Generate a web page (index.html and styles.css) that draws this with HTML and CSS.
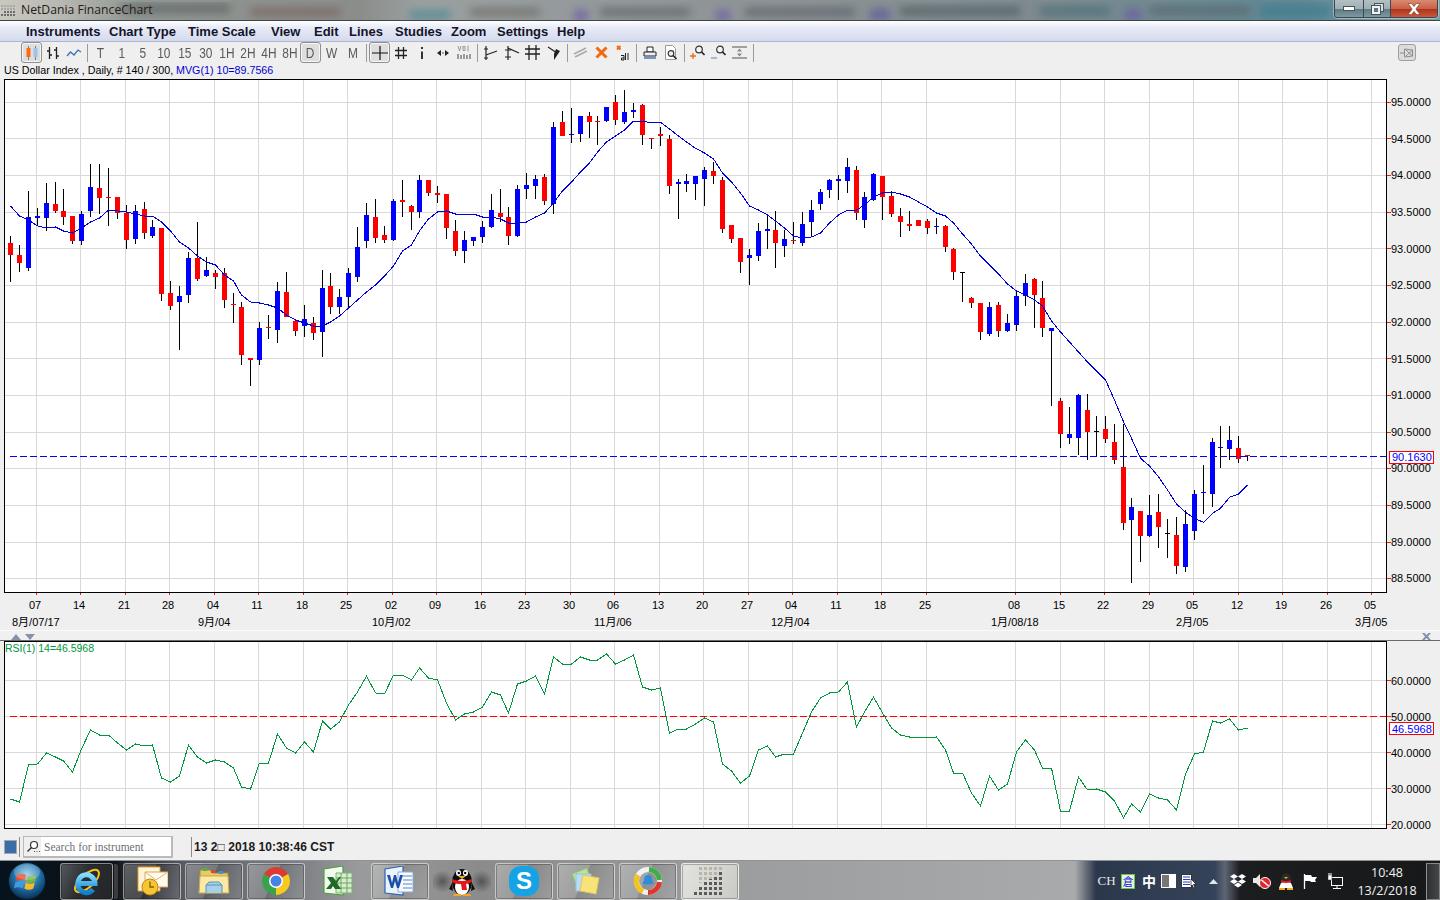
FILE: index.html
```html
<!DOCTYPE html>
<html lang="en">
<head>
<meta charset="utf-8">
<title>NetDania FinanceChart</title>
<link rel="stylesheet" href="styles.css">
</head>
<body>
<div class="window">
  <header class="titlebar">
    <svg class="aero" width="1440" height="21" viewBox="0 0 1440 21">
      <defs><filter id="soft"><feGaussianBlur stdDeviation="4"/></filter></defs>
      <g filter="url(#soft)" opacity="0.750">
        <rect x="120" y="4" width="110" height="9" fill="#5d6462"/>
        <rect x="250" y="8" width="90" height="8" fill="#77605c"/>
        <rect x="410" y="10" width="40" height="10" fill="#4f8a96"/>
        <rect x="470" y="8" width="70" height="8" fill="#6d6a66"/>
        <rect x="574" y="10" width="14" height="11" fill="#6a5aa6"/>
        <rect x="600" y="8" width="90" height="8" fill="#5a6266"/>
        <rect x="716" y="10" width="14" height="11" fill="#6a5aa6"/>
        <rect x="745" y="8" width="110" height="8" fill="#586068"/>
        <rect x="870" y="9" width="20" height="11" fill="#5a5a9a"/>
        <rect x="900" y="7" width="120" height="8" fill="#4c5a60"/>
        <rect x="1040" y="6" width="70" height="10" fill="#4d6f7a"/>
        <rect x="1125" y="9" width="16" height="11" fill="#6a5aa6"/>
        <rect x="1150" y="6" width="100" height="9" fill="#57686e"/>
        <rect x="1260" y="5" width="70" height="12" fill="#3d7d90"/>
      </g>
    </svg>
    <svg class="app-icon" width="16" height="16" viewBox="0 0 16 16">
      <g fill="#6d6d6d"><rect x="1" y="12" width="2" height="2"/><rect x="4" y="12" width="2" height="2"/><rect x="7" y="12" width="2" height="2"/><rect x="10" y="12" width="2" height="2"/><rect x="13" y="12" width="2" height="2"/><rect x="4" y="9" width="2" height="2"/><rect x="7" y="9" width="2" height="2"/><rect x="10" y="9" width="2" height="2"/><rect x="13" y="9" width="2" height="2"/></g>
      <g fill="#a9a9a0"><rect x="1" y="3" width="2" height="2"/><rect x="4" y="3" width="2" height="2"/><rect x="7" y="3" width="2" height="2"/><rect x="10" y="3" width="2" height="2"/><rect x="13" y="3" width="2" height="2"/><rect x="1" y="6" width="2" height="2"/><rect x="4" y="6" width="2" height="2"/><rect x="7" y="6" width="2" height="2"/><rect x="10" y="6" width="2" height="2"/><rect x="13" y="6" width="2" height="2"/></g>
    </svg>
    <span class="title-text">NetDania FinanceChart</span>
    <div class="win-controls">
      <div class="win-btn min"><svg width="12" height="6" viewBox="0 0 12 6"><rect x="0.5" y="0.5" width="11" height="4" fill="#fff" stroke="#44555c"/></svg></div>
      <div class="win-btn max"><svg width="13" height="12" viewBox="0 0 13 12"><rect x="3.5" y="0.5" width="9" height="8" fill="#d8dfe2" stroke="#44555c"/><rect x="0.5" y="2.5" width="9" height="9" fill="#eef2f3" stroke="#44555c"/><rect x="3" y="5" width="4" height="4" fill="#61747c"/></svg></div>
      <div class="win-btn close"><svg width="14" height="12" viewBox="0 0 14 12"><path d="M1 0.5h3.5L7 3.6 9.5 0.5H13L8.8 6 13 11.5H9.500L7 8.400 4.500 11.500H1L5.200 6Z" fill="#fff" stroke="#7c3225" stroke-width="0.600"/></svg></div>
    </div>
  </header>

  <nav class="menubar">
    <span>Instruments</span><span>Chart Type</span><span>Time Scale</span><span>View</span><span>Edit</span><span>Lines</span><span>Studies</span><span>Zoom</span><span>Settings</span><span>Help</span>
  </nav>

  <div class="toolbar">
    <div class="tool on"><svg width="16" height="16" viewBox="0 0 16 16"><path d="M4.500 1v14M11.500 1v14" stroke="#7a7a7a"/><rect x="2.500" y="3" width="4" height="9" fill="#ff6a10"/><rect x="9.500" y="3" width="4" height="9" fill="#9cc4ee"/></svg></div>
    <div class="tool"><svg width="14" height="16" viewBox="0 0 14 16"><path d="M3.500 2v12M1 6h2.500M3.500 10H6M10.500 2v12M8 5h2.500M10.500 11H13" stroke="#222" stroke-width="1.300" fill="none"/></svg></div>
    <div class="tool"><svg width="16" height="10" viewBox="0 0 16 10"><path d="M1 8l3.500-4L8 7l4-5 3 2" stroke="#3f6fb5" stroke-width="1.300" fill="none"/></svg></div>
    <div class="tool-sep"></div>
    <div class="tool"><span class="tool-label">T</span></div><div class="tool"><span class="tool-label">1</span></div><div class="tool"><span class="tool-label">5</span></div><div class="tool"><span class="tool-label">10</span></div><div class="tool"><span class="tool-label">15</span></div><div class="tool"><span class="tool-label">30</span></div><div class="tool"><span class="tool-label">1H</span></div><div class="tool"><span class="tool-label">2H</span></div><div class="tool"><span class="tool-label">4H</span></div><div class="tool"><span class="tool-label">8H</span></div><div class="tool on"><span class="tool-label">D</span></div><div class="tool"><span class="tool-label">W</span></div><div class="tool"><span class="tool-label">M</span></div>
    <div class="tool-sep"></div>
    <div class="tool on"><svg width="16" height="16" viewBox="0 0 16 16"><path d="M8 1v14M0 8h16" stroke="#111" stroke-width="1.200"/></svg></div>
    <div class="tool"><svg width="14" height="14" viewBox="0 0 14 14"><path d="M4.500 1v12M9.500 1v12M1 4.500h12M1 9.500h12" stroke="#222" stroke-width="1.300"/></svg></div>
    <div class="tool"><svg width="8" height="14" viewBox="0 0 8 14"><path d="M4 1v2M4 5.500v7.500" stroke="#333" stroke-width="2"/></svg></div>
    <div class="tool"><svg width="14" height="8" viewBox="0 0 14 8"><path d="M1 4l4-3v6zM13 4L9 1v6z" fill="#222"/><circle cx="7" cy="4" r="0.700" fill="#222"/></svg></div>
    <div class="tool"><svg width="14" height="15" viewBox="0 0 14 15"><g fill="#999"><rect x="0" y="9" width="2" height="5"/><rect x="3" y="10" width="2" height="4"/><rect x="6" y="9" width="2" height="5"/><rect x="9" y="10" width="2" height="4"/><rect x="12" y="9" width="2" height="5"/></g><path d="M1 1l1.500 5L4 1M6 1.500h2v4H6zM11 0.500v6" stroke="#999" fill="none"/></svg></div>
    <div class="tool-sep"></div>
    <div class="tool"><svg width="16" height="16" viewBox="0 0 16 16"><path d="M3 1v14M3 10l11-4" stroke="#222" stroke-width="1.200" fill="none"/><path d="M1 4h4M1 13h4" stroke="#222"/></svg></div>
    <div class="tool"><svg width="16" height="16" viewBox="0 0 16 16"><path d="M4 1v14M4 3l11 5" stroke="#222" stroke-width="1.200" fill="none"/><path d="M1 5h6M1 12h6" stroke="#222"/></svg></div>
    <div class="tool"><svg width="15" height="15" viewBox="0 0 15 15"><path d="M4 0v15M11 0v15M0 4h15M0 9h15" stroke="#222" stroke-width="1.300"/></svg></div>
    <div class="tool"><svg width="14" height="14" viewBox="0 0 14 14"><path d="M1 1l9 6" stroke="#222" stroke-width="1.200"/><path d="M9 3l4 2-6 9v-6z" fill="#222"/></svg></div>
    <div class="tool-sep"></div>
    <div class="tool"><svg width="15" height="11" viewBox="0 0 15 11"><path d="M1 7l12-6M2 10l12-6" stroke="#aaa" stroke-width="1.600"/></svg></div>
    <div class="tool"><svg width="13" height="13" viewBox="0 0 13 13"><path d="M1.500 1.500l10 10M11.500 1.500l-10 10" stroke="#f3690f" stroke-width="3"/></svg></div>
    <div class="tool"><svg width="14" height="16" viewBox="0 0 14 16"><path d="M1 1l3.500 3.500M4.500 1L1 4.500" stroke="#f3690f" stroke-width="1.800"/><path d="M5 10.500h3v4.500H5.500v-2H8M9.500 8v7M12 8v7" stroke="#222" fill="none"/></svg></div>
    <div class="tool-sep"></div>
    <div class="tool"><svg width="14" height="13" viewBox="0 0 14 13"><path d="M4 1h6v5H4z" fill="#fff" stroke="#222"/><path d="M1 6h12v4H1z" fill="#eee" stroke="#222"/><path d="M1 12h12" stroke="#4a78b8" stroke-width="1.500"/></svg></div>
    <div class="tool"><svg width="14" height="15" viewBox="0 0 14 15"><path d="M1.500 0.500h7l3 3v11h-10z" fill="#fff" stroke="#999"/><circle cx="7" cy="8.500" r="2.800" fill="#eef" stroke="#333" stroke-width="1.200"/><path d="M9 10.500l3.500 3.500" stroke="#222" stroke-width="1.600"/></svg></div>
    <div class="tool-sep"></div>
    <div class="tool"><svg width="15" height="15" viewBox="0 0 15 15"><circle cx="9" cy="4.500" r="3.300" fill="#f4f4f4" stroke="#333" stroke-width="1.200"/><path d="M11.500 7l3 3" stroke="#222" stroke-width="1.600"/><path d="M3 8v6M0 11h6" stroke="#f3690f" stroke-width="1.300"/></svg></div>
    <div class="tool"><svg width="15" height="15" viewBox="0 0 15 15"><circle cx="9" cy="4.500" r="3.300" fill="#f4f4f4" stroke="#333" stroke-width="1.200"/><path d="M11.500 7l3 3" stroke="#222" stroke-width="1.600"/><path d="M0 13h6" stroke="#7c9cc8" stroke-width="1.300"/></svg></div>
    <div class="tool"><svg width="15" height="13" viewBox="0 0 15 13"><path d="M0 1h15M0 12h15" stroke="#888" stroke-width="1.300"/><path d="M7.500 2.500l-2.500 3h5zM7.500 10.500l-2.500-3h5z" fill="#888"/></svg></div>
    <div class="tool-sep"></div>
    <div class="pin"><svg width="14" height="12" viewBox="0 0 14 12"><path d="M0 6h4M4.500 2v8M4.500 2l8 1v6l-8 1M12.500 3L6 9M6 3l6.500 6" stroke="#8c8c8c" fill="none"/></svg></div>
  </div>

  <div class="infoline">US Dollar Index , Daily, # 140 / 300, <span class="info-blue">MVG(1) 10=89.7566</span></div>

  <svg class="pane main-pane" width="1440" height="551" viewBox="0 79 1440 551">
    <rect class="frame" x="4.500" y="79.500" width="1382" height="513"/>
    <g id="main-grid"></g>
    <g id="candles"></g>
    <polyline id="ma" class="ma-line" points=""/>
    <line class="dash-blue" x1="10" y1="456.500" x2="1387" y2="456.500"/>
    <rect class="frame-line" x="4.500" y="79.500" width="1382" height="513"/>
    <g class="axis-text">
      <text x="1391" y="106">95.0000</text><text x="1391" y="143">94.5000</text><text x="1391" y="179">94.0000</text><text x="1391" y="216">93.5000</text><text x="1391" y="253">93.0000</text><text x="1391" y="289">92.5000</text><text x="1391" y="326">92.0000</text><text x="1391" y="363">91.5000</text><text x="1391" y="399">91.0000</text><text x="1391" y="436">90.5000</text><text x="1391" y="472">90.0000</text><text x="1391" y="509">89.5000</text><text x="1391" y="546">89.0000</text><text x="1391" y="582">88.5000</text>
    </g>
    <rect class="value-box" x="1389.500" y="451.500" width="44" height="12"/>
    <text class="value-text" x="1392" y="461">90.1630</text>
    <g class="axis-text centered">
      <text x="35" y="609">07</text><text x="79" y="609">14</text><text x="124" y="609">21</text><text x="168" y="609">28</text><text x="213" y="609">04</text><text x="257" y="609">11</text><text x="302" y="609">18</text><text x="346" y="609">25</text><text x="391" y="609">02</text><text x="435" y="609">09</text><text x="480" y="609">16</text><text x="524" y="609">23</text><text x="569" y="609">30</text><text x="613" y="609">06</text><text x="658" y="609">13</text><text x="702" y="609">20</text><text x="747" y="609">27</text><text x="791" y="609">04</text><text x="836" y="609">11</text><text x="880" y="609">18</text><text x="925" y="609">25</text><text x="1014" y="609">08</text><text x="1059" y="609">15</text><text x="1103" y="609">22</text><text x="1148" y="609">29</text><text x="1192" y="609">05</text><text x="1237" y="609">12</text><text x="1281" y="609">19</text><text x="1326" y="609">26</text><text x="1370" y="609">05</text>
    </g>
    <g class="axis-text">
      <text x="12" y="626">8月/07/17</text><text x="198" y="626">9月/04</text><text x="372" y="626">10月/02</text><text x="594" y="626">11月/06</text><text x="771" y="626">12月/04</text><text x="991" y="626">1月/08/18</text><text x="1176" y="626">2月/05</text><text x="1355" y="626">3月/05</text>
    </g>
  </svg>

  <div class="pane-band">
    <span class="tri up"></span><span class="tri down"></span>
    <svg class="band-x" width="9" height="7" viewBox="0 0 9 7"><path d="M0 0h2.500L4.500 2 6.500 0H9L6 3.500 9 7H6.500L4.500 5 2.500 7H0L3 3.500Z" fill="#8791ae"/></svg>
  </div>

  <svg class="pane rsi-pane" width="1440" height="192" viewBox="0 641 1440 192">
    <rect class="frame" x="4.500" y="641.500" width="1382" height="187"/>
    <g id="rsi-grid"></g>
    <line class="dash-red" x1="10" y1="716.500" x2="1387" y2="716.500"/>
    <polyline id="rsi" class="rsi-line" points=""/>
    <rect class="frame-line" x="4.500" y="641.500" width="1382" height="187"/>
    <text class="rsi-label" x="5" y="652">RSI(1) 14=46.5968</text>
    <g class="axis-text">
      <text x="1391" y="685">60.0000</text><text x="1391" y="721">50.0000</text><text x="1391" y="757">40.0000</text><text x="1391" y="793">30.0000</text><text x="1391" y="829">20.0000</text>
    </g>
    <rect class="value-box" x="1389.500" y="722.500" width="44" height="12"/>
    <text class="value-text" x="1392" y="733">46.5968</text>
  </svg>

  <div class="statusbar">
    <span class="status-square"></span>
    <span class="status-div"></span>
    <div class="search">
      <span class="search-icon"><svg width="14" height="13" viewBox="0 0 14 13"><circle cx="8" cy="5" r="3.500" fill="#fff" stroke="#333" stroke-width="1.200"/><path d="M5.500 7.500L1.500 11.500" stroke="#333" stroke-width="1.500"/><path d="M8 11.500h1M10.500 11.500h1M13 11.500h1" stroke="#555"/></svg></span>
      <span class="search-text">Search for instrument</span>
    </div>
    <span class="status-div wide"></span>
    <span class="status-time">13 2□ 2018 10:38:46 CST</span>
  </div>

  <footer class="taskbar">
    <div class="orb"><svg width="38" height="38" viewBox="0 0 38 38">
      <defs><radialGradient id="orbg" cx="50%" cy="35%" r="65%"><stop offset="0" stop-color="#8fd0ef"/><stop offset="0.550" stop-color="#1f6fa6"/><stop offset="1" stop-color="#0b2c50"/></radialGradient></defs>
      <circle cx="19" cy="19" r="18.500" fill="url(#orbg)" stroke="#0a1a28"/>
      <path d="M9 13q4.500-2.500 9 0l-1.500 6q-4.500-2.500-9 0z" fill="#e8492b"/>
      <path d="M19.500 13.500q4.500 2.500 9 0l-1.500 6q-4.500 2.500-9 0z" fill="#7ab83a"/>
      <path d="M7.300 20.500q4.500-2.500 9 0l-1.500 6q-4.500-2.500-9 0z" fill="#3d9be0"/>
      <path d="M17.800 20.500q4.500 2.500 9 0l-1.500 6q-4.500 2.500-9 0z" fill="#f6bb28"/>
      <ellipse cx="19" cy="10" rx="13" ry="8" fill="#fff" opacity="0.220"/>
    </svg></div>

    <div class="task-btn ie"><svg width="30" height="31" viewBox="0 0 30 31">
      <defs><linearGradient id="ieg" x1="0" y1="0" x2="0" y2="1"><stop offset="0" stop-color="#7fdcff"/><stop offset="1" stop-color="#0f7ecb"/></linearGradient></defs>
      <ellipse cx="15" cy="15" rx="15" ry="6.500" transform="rotate(-42 15 15)" fill="none" stroke="#f4c21f" stroke-width="2"/>
      <path d="M6.500 17.500H23A8.600 9 0 1 0 21 23.500" fill="none" stroke="url(#ieg)" stroke-width="5"/>
    </svg></div>
    <span class="task-sliver"></span>

    <div class="task-btn"><svg width="32" height="30" viewBox="0 0 32 30">
      <path d="M2 1h22v24H2z" fill="#fff3d8" stroke="#e89a1e"/><path d="M9 6h23v15H9z" fill="#fffbee" stroke="#d8a85c"/><path d="M9 6l11 8 12-8" fill="none" stroke="#e0b46a"/>
      <circle cx="14" cy="21" r="8" fill="#f6c733" stroke="#c18a12"/><path d="M14 15.500V21h4" fill="none" stroke="#8a5d08" stroke-width="1.300"/>
    </svg></div>

    <div class="task-btn"><svg width="32" height="28" viewBox="0 0 32 28">
      <path d="M2 3h10l3 3h15v20H2z" fill="#e9c964" stroke="#a98a32"/><rect x="5" y="1" width="4" height="3" fill="#47b548"/><rect x="13" y="3" width="4" height="3" fill="#d8483c"/><rect x="21" y="4" width="4" height="3" fill="#3f93d8"/>
      <path d="M2 9h28l1 17H1z" fill="#fbe9a6" stroke="#c7a94e"/><path d="M8 26V18h16v8M8 18l3-3h10l3 3" fill="#a5d0e8" stroke="#5a93b8"/>
    </svg></div>

    <div class="task-btn"><svg width="30" height="30" viewBox="0 0 30 30">
      <path d="M15 15L2.880 8A14 14 0 0 1 27.120 8Z" fill="#db3b30"/><path d="M15 15L27.120 8A14 14 0 0 1 15 29Z" fill="#f8c91e"/><path d="M15 15L15 29A14 14 0 0 1 2.880 8Z" fill="#3aa24a"/>
      <circle cx="15" cy="15" r="7" fill="#fff"/><circle cx="15" cy="15" r="5.500" fill="#4683e8"/>
    </svg></div>

    <div class="task-btn flat"><svg width="30" height="30" viewBox="0 0 30 30">
      <path d="M1 3l19-3v29l-19-2z" fill="#f3faee" stroke="#4aa33c" stroke-width="1.200"/>
      <path d="M13 7h16v20H13z" fill="#d9ecd2" stroke="#7ab56a"/><path d="M13 12h16M13 17h16M13 22h16M18 7v20M24 7v20" stroke="#6aa85a"/>
      <path d="M4 11h6l3 4 3-4h2l-4 6 4 6h-6l-2-3-2 3H3l5-6z" fill="#1e6b23"/>
    </svg></div>

    <div class="task-btn"><svg width="32" height="30" viewBox="0 0 32 30">
      <path d="M1 3l18-3v29l-18-2z" fill="#eaf2fb" stroke="#2b63b5" stroke-width="1.200"/>
      <path d="M14 6h15v20H14z" fill="#f7faff" stroke="#8aaad8"/><path d="M19 10h9M19 14h9M19 18h9M19 22h9" stroke="#5b86c6"/>
      <path d="M3 9h3l2 8 2-8h2l2 8 2-8h3l-4 13h-2l-2-7-2 7H7z" fill="#1c4fa8"/>
    </svg></div>

    <div class="task-btn flat qq"><svg width="28" height="32" viewBox="0 0 28 32">
      <ellipse cx="14" cy="17" rx="10" ry="13" fill="#0f0f0f"/><ellipse cx="14" cy="22" rx="7" ry="8" fill="#fff"/>
      <ellipse cx="10.500" cy="8" rx="2.500" ry="3" fill="#fff"/><ellipse cx="17.500" cy="8" rx="2.500" ry="3" fill="#fff"/><circle cx="10.800" cy="8" r="1.200" fill="#000"/><circle cx="17.200" cy="8" r="1.200" fill="#000"/>
      <path d="M10 11h8l-4 3z" fill="#f5b21c"/><path d="M4 14q10 4 20 0v3q-4 2-6 2l1 6h-5l-1-6q-6 0-9-2z" fill="#e3161c"/>
      <path d="M4 18l-3 6 4 2zM24 18l3 6-4 2z" fill="#0f0f0f"/><path d="M6 29h7v2H5zM15 29h7l1 2h-8z" fill="#f5a81c"/>
    </svg></div>

    <div class="task-btn"><span class="skype">S</span></div>

    <div class="task-btn"><svg width="32" height="28" viewBox="0 0 32 28">
      <path d="M2 7L17 1l4 13-14 5z" fill="#b7e39a" stroke="#8cc37a"/><path d="M6 7l15 0v17H6z" fill="#b9dcf5" stroke="#9cc3de"/><path d="M13 8l16 3-3 16-16-3z" fill="#f8e27a" stroke="#e1c756"/>
    </svg></div>

    <div class="task-btn"><svg width="30" height="30" viewBox="0 0 30 30">
      <circle cx="15" cy="15" r="11.500" fill="none" stroke="#f2f2f2" stroke-width="5"/>
      <path d="M5 9A11.500 11.500 0 0 0 10 25.500" fill="none" stroke="#f3c41d" stroke-width="5"/><path d="M16 3.500A11.500 11.500 0 0 1 26.500 14" fill="none" stroke="#3fae49" stroke-width="5"/><path d="M26.500 16A11.500 11.500 0 0 1 15 26.500" fill="none" stroke="#d93a2e" stroke-width="5"/>
      <path d="M15 9q4 0 4 5l1.500 4q-1.500 1-2-.5-3.500 2-7 0-.5 1.500-2 .5L11 14q0-5 4-5z" fill="#2a8de0"/>
    </svg></div>

    <div class="task-btn pale"><svg width="32" height="28" viewBox="0 0 32 28">
      <defs><pattern id="dots" width="5" height="5" patternUnits="userSpaceOnUse"><rect width="3" height="3" fill="#5a5a5a"/></pattern><pattern id="dotsl" width="5" height="5" patternUnits="userSpaceOnUse"><rect width="3" height="3" fill="#b8b4a8"/></pattern></defs>
      <path d="M5 0h24v16H5z" fill="url(#dotsl)"/>
      <path d="M0 28v-5h5v-5h5v-3h5v-3h5v-2h5v-5h5v23z" fill="url(#dots)"/>
    </svg></div>

    <div class="tray">
      <span class="tray-item ch">CH</span>
      <span class="tray-item w22"><span class="cang">倉</span></span>
      <span class="tray-item zhong">中</span>
      <span class="tray-item w18"><svg width="15" height="14" viewBox="0 0 15 14"><rect width="15" height="14" fill="#fff"/><rect x="1" y="1" width="7" height="12" fill="#777"/></svg></span>
      <span class="tray-item w24"><svg width="16" height="15" viewBox="0 0 16 15"><rect x="0.500" y="0.500" width="10" height="13" fill="#fff" stroke="#333"/><path d="M2 3h7M2 5.500h7M2 8h7M2 10.500h7" stroke="#2b3fc0"/><path d="M10 5l5 5-2.500 .5 1.500 3-1.500 .5-1.300-3L10 12z" fill="#fff" stroke="#000" stroke-width="0.600"/></svg></span>
      <span class="tray-item w24"><svg width="9" height="5" viewBox="0 0 9 5"><path d="M4.500 0L9 5H0z" fill="#dfe6ee"/></svg></span>
      <span class="tray-item w25"><svg width="16" height="14" viewBox="0 0 16 14"><path d="M4 0L8 2.500 4 5 0 2.500ZM12 0L16 2.500 12 5 8 2.500ZM4 5L8 7.500 4 10 0 7.500ZM12 5L16 7.500 12 10 8 7.500ZM8 8.500L12 11 8 13.500 4 11Z" fill="#fff"/></svg></span>
      <span class="tray-item w24"><svg width="18" height="16" viewBox="0 0 18 16"><path d="M0 5h3l4-4v13l-4-4H0z" fill="#e8e8e8"/><circle cx="12" cy="10" r="5.500" fill="#e3242b" stroke="#fff"/><path d="M8.500 7l7 6" stroke="#fff" stroke-width="1.600"/></svg></span>
      <span class="tray-item w24"><svg width="16" height="18" viewBox="0 0 16 18"><ellipse cx="8" cy="8" rx="5" ry="7" fill="#2a2a2a"/><path d="M3 11q5-3 10 0l2 5H1z" fill="#fff"/><path d="M3 8q5 2 10 0v2q-5 2-10 0z" fill="#e3161c"/><path d="M6 5h4l-2 2z" fill="#f5b21c"/><path d="M1 16h6v2H1zM9 16h6v2H9z" fill="#f5a81c"/></svg></span>
      <span class="tray-item w24"><svg width="14" height="15" viewBox="0 0 14 15"><path d="M1.500 0v15" stroke="#fff" stroke-width="1.300"/><path d="M2 1h6l1 2h5l-2 3 1 2H8L7 7H2z" fill="#fff"/></svg></span>
      <span class="tray-item w26"><svg width="16" height="16" viewBox="0 0 16 16"><rect x="4.500" y="4.500" width="11" height="8" fill="none" stroke="#fff"/><path d="M10 12.500V15M6 15.500h8" stroke="#fff"/><rect x="1" y="2" width="4" height="5" fill="#fff" stroke="#333" stroke-width="0.500"/><path d="M2 0v2M4 0v2" stroke="#fff"/></svg></span>
      <span class="clock"><span>10:48</span><span>13/2/2018</span></span>
      <span class="show-desktop"></span>
    </div>
  </footer>
</div>
<script src="chart.js"></script>
</body>
</html>
```

FILE: styles.css
```css
* { box-sizing: border-box; }
html, body { margin: 0; padding: 0; }
body { width: 1440px; height: 900px; overflow: hidden; background: #efefef; font-family: "Liberation Sans", "Noto Sans CJK TC", sans-serif; }
.window { width: 1440px; height: 900px; display: flex; flex-direction: column; }

.titlebar { height: 21px; flex: none; position: relative; display: flex; align-items: center; overflow: hidden; background: linear-gradient(90deg, #c9c9c0 0, #b7b8b2 60px, #8f9693 140px, #8b8d8a 360px, #9aa0a0 420px, #8c9294 800px, #7d8a8e 1050px, #5f8794 1300px, #7ea0a8 1440px); border-bottom: 1px solid #3c4448; }
.aero { position: absolute; left: 0; top: 0; }
.app-icon { position: relative; margin: 0 5px 0 0; }
.title-text { position: relative; font-family: "Open Sans", "Liberation Sans", sans-serif; font-size: 12.200px; color: #2a1c14; line-height: 20px; }
.win-controls { position: absolute; left: 1334px; top: 0; display: flex; height: 18px; border: 1px solid #39494f; border-top: 0; border-radius: 0 0 4px 4px; overflow: hidden; box-shadow: 0 0 0 1px rgba(255,255,255,.35); }
.win-btn { display: flex; align-items: center; justify-content: center; height: 100%; }
.min { width: 29px; background: linear-gradient(#b3bfc3 0, #9fb0b6 50%, #5f7a84 52%, #7f98a0 100%); border-right: 1px solid #39494f; }
.max { width: 27px; background: linear-gradient(#b3bfc3 0, #9fb0b6 50%, #5f7a84 52%, #7f98a0 100%); border-right: 1px solid #39494f; }
.close { width: 46px; background: linear-gradient(#d98a70 0, #c9614a 50%, #b03018 52%, #c85a3a 100%); }

.menubar { height: 21px; flex: none; display: grid; grid-template-columns: 83px 79px 83px 43px 35px 46px 56px 46px 60px 30px; align-items: center; padding-left: 26px; font-size: 13px; font-weight: 700; white-space: nowrap; color: #14142a; background: linear-gradient(#ffffff 0, #e9ecf7 30%, #d4daee 100%); border-bottom: 1px solid #b3b5ce; }

.toolbar { height: 21px; flex: none; display: flex; align-items: center; padding-left: 21px; background: #efefef; }
.tool { width: 21px; height: 21px; flex: none; display: flex; align-items: center; justify-content: center; border-radius: 3px; }
.tool-label { display: inline-block; font-size: 14px; color: #5a5a5a; transform: scaleX(.85); }
.tool.on { border: 1px solid #8f8f8f; background: #dedede; box-shadow: inset 0 0 0 1px #f6f6f6; }
.tool-sep { width: 6px; height: 18px; flex: none; background: linear-gradient(#9a9a9a, #9a9a9a) center / 1px 100% no-repeat; }
.pin { width: 18px; height: 17px; flex: none; margin-left: 642px; display: flex; align-items: center; justify-content: center; background: #dcdcdc; border: 1px solid #a0a0a0; border-radius: 3px; }

.infoline { height: 16px; flex: none; padding-left: 4px; font-size: 10.700px; line-height: 15px; color: #000; white-space: pre-wrap; }
.info-blue { color: #0000d0; }

.pane { display: block; flex: none; }
.rsi-pane { position: relative; z-index: 1; margin-bottom: -4px; }
.frame { fill: #fff; stroke: none; }
.frame-line { fill: none; stroke: #000; stroke-width: 1; shape-rendering: crispEdges; }
.grid-line { stroke: #d9d9d9; stroke-width: 1; shape-rendering: crispEdges; }
.tick { stroke: #e8231a; stroke-width: 1; shape-rendering: crispEdges; }
.wick { fill: #000; shape-rendering: crispEdges; }
.body-r { fill: #ff0000; shape-rendering: crispEdges; }
.body-b { fill: #0000ff; shape-rendering: crispEdges; }
.body-k { fill: #000; shape-rendering: crispEdges; }
.ma-line { fill: none; stroke: #0000d8; stroke-width: 1; shape-rendering: crispEdges; }
.rsi-line { fill: none; stroke: #00963c; stroke-width: 1; shape-rendering: crispEdges; }
.dash-blue { stroke: #0000ff; stroke-width: 1; stroke-dasharray: 7 3; shape-rendering: crispEdges; }
.dash-red { stroke: #ff0000; stroke-width: 1; stroke-dasharray: 7 3; shape-rendering: crispEdges; }
.axis-text text { font-size: 11px; fill: #000; }
.centered text { text-anchor: middle; }
.value-box { fill: #fff; stroke: #ff0000; stroke-width: 1; shape-rendering: crispEdges; }
.value-text { font-size: 11px; fill: #0000ff; }
.rsi-label { font-size: 10.500px; fill: #00963c; }

.pane-band { height: 11px; flex: none; position: relative; display: flex; align-items: center; gap: 4px; padding-left: 11px; padding-top: 2px; background: #f0f0f0; border-top: 1px solid #fbfbfb; border-bottom: 1px solid #6a6a6a; }
.tri { width: 0; height: 0; border-left: 5.500px solid transparent; border-right: 5.500px solid transparent; }
.tri.up { border-bottom: 6px solid #8791ae; }
.tri.down { border-top: 6px solid #8791ae; }
.band-x { position: absolute; left: 1422px; top: 2px; }

.statusbar { height: 31px; flex: none; display: flex; align-items: center; padding: 5px 0 0 4px; background: #efefef; }
.status-square { width: 13px; height: 14px; background: #3a6ea8; border: 1px solid #a7a7a7; }
.status-div { width: 1px; height: 20px; background: #8a8a8a; margin: 0 3px 0 2px; }
.status-div.wide { margin: 0 3px 0 18px; }
.search { width: 150px; height: 22px; display: flex; align-items: center; border: 2px solid #b9b9b9; border-width: 1px 2px 2px 1px; background: #fff; }
.search-icon { width: 17px; height: 100%; display: flex; align-items: center; justify-content: center; background: #efefef; }
.search-text { padding-left: 3px; font-family: "Liberation Serif", serif; font-size: 11.500px; color: #707070; }
.status-time { margin-left: -1px; font-size: 12px; font-weight: 700; letter-spacing: .05px; color: #1b1b1b; }

.taskbar { height: 40px; flex: none; display: flex; align-items: center; gap: 4px; padding: 1px 0 0 8px; border-top: 1px solid #8d9399; background: linear-gradient(90deg, #07131c 0, #0c1218 115px, #23262a 125px, #5d6066 190px, #7d8084 300px, #9a9b9c 360px, #8b8b8b 480px, #9c9d9e 740px, #a9aaab 1075px, #2b374b 1096px, #35435a 1215px, #5d6575 1225px, #1c1d1f 1240px, #17181a 1440px); }
.orb { width: 38px; height: 38px; flex: none; margin-right: 10px; }
.task-btn { width: 58px; height: 37px; flex: none; display: flex; align-items: center; justify-content: center; border: 1px solid rgba(255,255,255,.45); border-radius: 3px; background: linear-gradient(115deg, rgba(255,255,255,.28) 0, rgba(255,255,255,.12) 45%, rgba(0,0,0,.05) 46%, rgba(255,255,255,.12) 100%); box-shadow: inset 0 0 0 1px rgba(0,0,0,.25); }
.task-btn.ie { width: 53px; background: linear-gradient(115deg, #55585c 0, #2a2d30 45%, #232528 100%); }
.task-sliver { width: 4px; height: 35px; flex: none; margin: 0 1px 0 -3px; background: #3a3c40; border-radius: 0 2px 2px 0; }
.task-btn.flat { border-color: transparent; background: none; box-shadow: none; }
.task-btn.qq { background: radial-gradient(circle at 15% 50%, rgba(40,40,40,.55) 0, rgba(40,40,40,0) 22%), radial-gradient(circle at 85% 50%, rgba(40,40,40,.55) 0, rgba(40,40,40,0) 22%); }
.task-btn.pale { background: linear-gradient(115deg, #e3e3e0 0, #c9c9c6 100%); }
.skype { width: 30px; height: 30px; display: flex; align-items: center; justify-content: center; font-size: 24px; font-weight: 700; color: #fff; background: #16a3e6; border-radius: 12px; }

.tray { margin-left: auto; display: flex; align-items: center; height: 100%; color: #fff; }
.tray-item { flex: none; display: flex; align-items: center; justify-content: center; }
.ch { width: 21px; font-family: "Liberation Serif", serif; font-size: 13px; color: #e8e8e8; }
.w18 { width: 18px; }
.w22 { width: 22px; }
.w24 { width: 24px; }
.w25 { width: 25px; }
.w26 { width: 26px; }
.cang { width: 14px; height: 15px; display: flex; align-items: center; justify-content: center; font-size: 11px; line-height: 14px; color: #1414e0; background: #e6f4dc; border: 1px solid #6cc24a; font-family: "Noto Sans CJK TC", sans-serif; }
.zhong { width: 20px; font-family: "Noto Sans CJK TC", sans-serif; font-size: 14px; font-weight: 700; color: #fff; }
.clock { width: 78px; flex: none; display: flex; flex-direction: column; align-items: center; gap: 3px; font-family: "Open Sans", "Liberation Sans", sans-serif; font-size: 12.500px; line-height: 15px; color: #f2f2f2; }
.show-desktop { width: 14px; height: 37px; flex: none; border: 1px solid rgba(255,255,255,.4); background: linear-gradient(90deg, rgba(255,255,255,.1), rgba(255,255,255,.2)); }
```

FILE: chart.js
```js
var NS = 'http://www.w3.org/2000/svg';
function add(parent, tag, attrs) {
  var el = document.createElementNS(NS, tag);
  for (var k in attrs) el.setAttribute(k, attrs[k]);
  parent.appendChild(el);
  return el;
}
function col(i) { return Math.round(10 + 8.9 * i); }

// segments: baseline y + rows of [high, low, bodyTop, bodyBottom, colour], in 1/3 px
var segments = [
  [150, [[258,396,279,315,'r'],[285,366,315,339,'r'],[123,363,201,354,'b'],[174,225,198,204,'b'],[99,243,159,204,'b'],[96,189,162,183,'r'],[117,225,183,201,'r'],[198,282,198,273,'r'],[183,285,192,273,'b'],[42,201,111,183,'b'],[42,192,114,144,'r'],[54,228,141,144,'r'],[141,207,141,189,'r'],[165,297,189,270,'r'],[165,282,183,267,'b'],[156,267,177,249,'r'],[210,264,231,258,'b'],[234,453,234,432,'r'],[393,480,429,468,'r'],[408,600,438,456,'b'],[306,459,324,435,'b'],[216,393,324,387,'r'],[321,381,360,378,'b'],[360,417,369,381,'r'],[354,474,369,450,'r'],[429,519,462,465,'r'],[456,645,471,615,'r'],[624,708,624,630,'r'],[516,645,534,630,'b'],[495,567,531,534,'r'],[396,579,423,540,'b'],[366,501,426,501,'r'],[513,558,513,543,'r'],[465,561,507,528,'b'],[501,570,519,549,'r'],[360,621,414,546,'b'],[369,492,408,471,'r'],[417,492,441,471,'b'],[354,471,369,441,'b']]],
  [85, [[426,591,486,576,'b'],[354,489,390,468,'b'],[342,474,396,459,'r'],[423,474,450,465,'r'],[342,468,348,465,'b'],[285,396,345,351,'r'],[360,435,363,381,'r'],[270,399,285,381,'b'],[285,333,285,324,'r'],[303,354,324,330,'r'],[327,462,327,429,'r'],[405,513,438,498,'r'],[438,534,465,498,'b'],[456,483,456,468,'b'],[408,474,426,456,'b'],[327,429,375,426,'b'],[312,411,384,396,'r'],[366,480,396,453,'r'],[300,456,312,453,'b'],[264,342,300,312,'b'],[270,342,282,303,'b'],[267,360,276,348,'r'],[111,387,126,357,'b'],[78,153,111,153,'r'],[69,174,147,150,'b'],[93,171,93,147,'b'],[81,159,93,111,'r'],[93,180,108,111,'r'],[66,111,66,108,'b'],[30,120,51,105,'r'],[15,117,81,111,'b'],[54,99,75,81,'b'],[57,180,60,150,'r'],[159,192,159,162,'r'],[126,183,147,153,'r'],[150,327,162,303,'r'],[282,402,291,297,'b'],[267,321,288,297,'b'],[273,345,273,297,'b']]],
  [140, [[81,198,90,117,'b'],[66,132,93,108,'r'],[111,279,120,267,'r'],[255,309,255,297,'r'],[294,399,294,366,'r'],[327,435,345,354,'b'],[249,363,273,348,'b'],[225,327,267,273,'b'],[213,384,270,309,'r'],[270,351,297,318,'b'],[246,312,300,303,'r'],[216,318,252,309,'b'],[180,288,210,246,'b'],[147,210,156,192,'b'],[117,174,120,150,'b'],[105,180,117,123,'b'],[54,159,81,123,'b'],[78,240,90,219,'r'],[156,264,171,240,'b'],[99,183,102,180,'b'],[108,240,108,171,'r'],[156,231,168,222,'r'],[204,291,228,246,'r'],[213,273,252,258,'r'],[240,258,240,258,'r'],[237,282,243,264,'r'],[234,282,258,261,'b'],[255,336,258,321,'r'],[324,420,327,396,'r'],[396,486,396,399,'k'],[471,504,474,489,'r'],[489,600,489,576,'r'],[486,588,501,582,'b'],[486,591,495,573,'r'],[522,576,549,573,'b'],[453,573,468,555,'b'],[402,498,429,468,'b'],[414,564,417,465,'r'],[423,591,474,564,'r']]],
  [380, [[-156,77,-156,-147,'b'],[55,204,64,161,'r'],[81,192,162,174,'b'],[42,225,45,174,'b'],[42,240,90,156,'r'],[108,231,154,157,'k'],[108,189,147,177,'r'],[132,252,186,240,'r'],[132,450,261,429,'r'],[354,609,381,420,'b'],[393,546,393,468,'r'],[345,471,405,468,'b'],[342,504,396,441,'r'],[417,534,459,462,'k'],[411,582,465,558,'r'],[390,576,432,561,'b'],[330,480,342,453,'b'],[255,402,336,339,'b'],[174,381,186,342,'b'],[138,264,201,204,'b'],[138,240,180,207,'b'],[168,249,204,237,'r'],[225,243,225,228,'r']]]
];

var maSegments = [
  [150, [168,198,210,228,234,231,243,249,234,216,204,180,183,186,192,198,198,216,243,276,294,318,336,345,375,393,435,456,459,465,474,495,510,519,528,528,516,498,474]],
  [85, [645,621,600,573,543,498,480,438,402,381,378,387,387,387,396,396,402,414,414,411,396,384,354,318,291,261,234,201,171,153,135,108,108,114,112,132,153,171,190]],
  [140, [39,57,99,126,159,198,210,225,243,264,288,294,291,279,249,225,210,210,195,171,159,156,162,171,186,201,219,228,249,282,312,348,375,402,432,453,465,480,498]],
  [380, [-177,-144,-114,-84,-54,-27,0,60,125,175,235,258,290,330,372,397,415,427,400,385,352,342,315]]
];

var rsi = [799,802,765,764,753,757,761,772,749,730,735,735,743,750,744,746,745,778,782,776,745,757,763,760,762,768,787,789,763,763,734,748,753,742,752,721,729,722,705,692,676,693,694,675,675,680,668,678,680,703,720,714,712,707,692,695,713,684,681,676,694,657,664,664,657,660,660,654,664,660,655,687,690,688,733,729,729,724,718,722,764,771,783,776,750,746,757,754,754,733,712,698,693,692,682,727,712,697,713,728,735,737,737,738,737,750,773,773,793,806,776,790,784,752,740,750,768,768,811,811,777,790,789,792,801,818,804,812,794,798,800,810,774,754,752,721,723,719,730,728];

var gridX = [36,80,125,169,214,258,303,347,392,436,481,525,570,614,659,703,748,792,837,881,926,1015,1060,1104,1149,1193,1238,1282,1327,1371];

function drawGrid(group, top, bottom, rows) {
  rows.forEach(function (y) {
    add(group, 'line', { 'class': 'grid-line', x1: 5, y1: y + .5, x2: 1386, y2: y + .5 });
    add(group, 'line', { 'class': 'tick', x1: 1387, y1: y + .5, x2: 1391, y2: y + .5 });
  });
  gridX.forEach(function (x) {
    add(group, 'line', { 'class': 'grid-line', x1: x + .5, y1: top, x2: x + .5, y2: bottom });
  });
}

var mainRows = [];
for (var n = 0; n < 14; n++) mainRows.push(Math.round(101.6 + 36.67 * n));
var mainGrid = document.getElementById('main-grid');
drawGrid(mainGrid, 80, 592, mainRows);
gridX.forEach(function (x) {
  add(mainGrid, 'line', { 'class': 'tick', x1: x + .5, y1: 593, x2: x + .5, y2: 595 });
});

var rsiGrid = document.getElementById('rsi-grid');
drawGrid(rsiGrid, 642, 828, [680, 716, 752, 788, 824]);

var candles = document.getElementById('candles');
var index = 0;
segments.forEach(function (segment) {
  var base = segment[0];
  segment[1].forEach(function (row) {
    var x = col(index++);
    var high = Math.round(base + row[0] / 3), low = Math.round(base + row[1] / 3);
    var top = Math.round(base + row[2] / 3), bottom = Math.round(base + row[3] / 3);
    add(candles, 'rect', { 'class': 'wick', x: x, y: high, width: 1, height: Math.max(low - high, 1) });
    add(candles, 'rect', { 'class': 'body-' + row[4], x: x - 2, y: top, width: 5, height: Math.max(bottom - top, 1) });
  });
});

var points = [];
index = 0;
maSegments.forEach(function (segment) {
  segment[1].forEach(function (z) {
    points.push((col(index++) + .5) + ',' + (segment[0] + z / 3).toFixed(1));
  });
});
document.getElementById('ma').setAttribute('points', points.join(' '));

document.getElementById('rsi').setAttribute('points', rsi.map(function (y, i) {
  return (col(i) + .5) + ',' + y;
}).join(' '));
```
